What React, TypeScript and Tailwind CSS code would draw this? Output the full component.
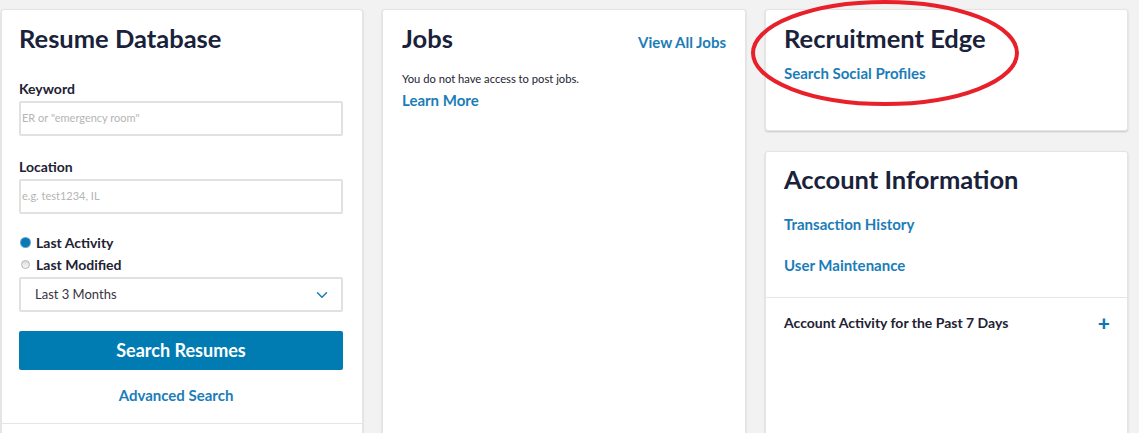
import { ChevronDown } from "lucide-react";

const card = "rounded-[3px] bg-white border border-[#e4e4e4] shadow-[0_1px_2px_rgba(0,0,0,0.18)]";
const heading = "text-[25.5px] leading-[31px] font-bold text-[#19223a]";
const link = "text-[15px] leading-[18px] font-bold text-[#1b7db8]";
const label = "text-[14px] leading-[17px] font-bold text-[#1e2233]";

function Radio({ checked }: { checked?: boolean }) {
  return checked ? (
    <span className="inline-block h-[9px] w-[9px] rounded-full bg-[#0a78b3] shadow-[0_0_0_1px_#5aa2cc]" />
  ) : (
    <span className="inline-block h-[9px] w-[9px] rounded-full border border-[#b3b3b3] bg-gradient-to-b from-[#dcdcdc] to-[#f7f7f7]" />
  );
}

function ResumeDatabase() {
  return (
    <section className={`${card} h-[440px] flex flex-col`}>
      <div className="pl-[17px] pr-[19px] pt-[13px]">
        <h2 className={heading}>Resume Database</h2>
        <p className={`${label} mt-[26px]`}>Keyword</p>
        <div className="mt-[4px] h-[35px] border-2 border-[#e1e1e1] rounded-[2px] flex items-center px-[1px]">
          <span className="text-[11px] text-[#b5b5b5]">ER or "emergency room"</span>
        </div>
        <p className={`${label} mt-[22px]`}>Location</p>
        <div className="mt-[4px] h-[35px] border-2 border-[#e1e1e1] rounded-[2px] flex items-center px-[1px]">
          <span className="text-[11px] text-[#b5b5b5]">e.g. test1234, IL</span>
        </div>
        <div className="mt-[20px] flex flex-col gap-[5px]">
          <div className="flex items-center gap-[6px] pl-[2px]">
            <Radio checked />
            <span className={label}>Last Activity</span>
          </div>
          <div className="flex items-center gap-[6px] pl-[2px]">
            <Radio />
            <span className={label}>Last Modified</span>
          </div>
        </div>
        <div className="mt-[4px] h-[35px] border-2 border-[#e1e1e1] rounded-[2px] flex items-center justify-between pl-[14px] pr-[10px]">
          <span className="text-[13px] text-[#3a3340]">Last 3 Months</span>
          <ChevronDown className="h-[18px] w-[18px] text-[#1b7db8]" strokeWidth={2} />
        </div>
        <button className="mt-[19px] w-full h-[39px] rounded-[2px] bg-[#007cb3] text-white text-[18px] font-bold">
          Search Resumes
        </button>
        <p className={`${link} text-[15.5px] mt-[16px] mr-[10px] text-center`}>Advanced Search</p>
      </div>
      <div className="mt-[19px] border-t border-[#e6e6e6]" />
    </section>
  );
}

function Jobs() {
  return (
    <section className={`${card} h-[440px] px-[19px] pt-[13px]`}>
      <div className="flex items-start justify-between">
        <h2 className={heading}>Jobs</h2>
        <a className={`${link} mt-[10px]`}>View All Jobs</a>
      </div>
      <p className="mt-[18px] text-[11.2px] leading-[14px] text-[#222433]">
        You do not have access to post jobs.
      </p>
      <a className={`${link} block mt-[5px]`}>Learn More</a>
    </section>
  );
}

function RightColumn() {
  return (
    <div className="flex flex-col gap-[20px]">
      <section className={`${card} h-[122px] px-[18px] pt-[13px]`}>
        <h2 className={heading}>Recruitment Edge</h2>
        <a className={`${link} block mt-[10px]`}>Search Social Profiles</a>
      </section>
      <section className={`${card} h-[300px]`}>
        <div className="px-[18px] pt-[12px]">
          <h2 className={heading}>Account Information</h2>
          <a className={`${link} block mt-[20px]`}>Transaction History</a>
          <a className={`${link} block mt-[23px]`}>User Maintenance</a>
        </div>
        <div className="mt-[23px] border-t border-[#e6e6e6]" />
        <div className="px-[18px] pt-[16px] pr-[17px] flex items-center justify-between">
          <span className="text-[14px] leading-[17px] font-bold text-[#1e2233]">
            Account Activity for the Past 7 Days
          </span>
          <span className="text-[#0a7ab5] text-[21px] leading-[17px] font-black">+</span>
        </div>
      </section>
    </div>
  );
}

export default function App() {
  return (
    <div
      className="relative h-[433px] overflow-hidden bg-[#f2f2f2] pl-[1px] pt-[9px]"
      style={{ fontFamily: "Lato, 'Open Sans', sans-serif" }}
    >
      <div className="grid grid-cols-[362px_364px_363px] gap-[19px]">
        <ResumeDatabase />
        <Jobs />
        <RightColumn />
      </div>
      <svg
        className="absolute left-[749px] top-0 pointer-events-none"
        width="274"
        height="110"
        viewBox="0 0 274 110"
      >
        <ellipse cx="136" cy="53" rx="132" ry="51" fill="none" stroke="#e8202a" strokeWidth="4" />
      </svg>
    </div>
  );
}
